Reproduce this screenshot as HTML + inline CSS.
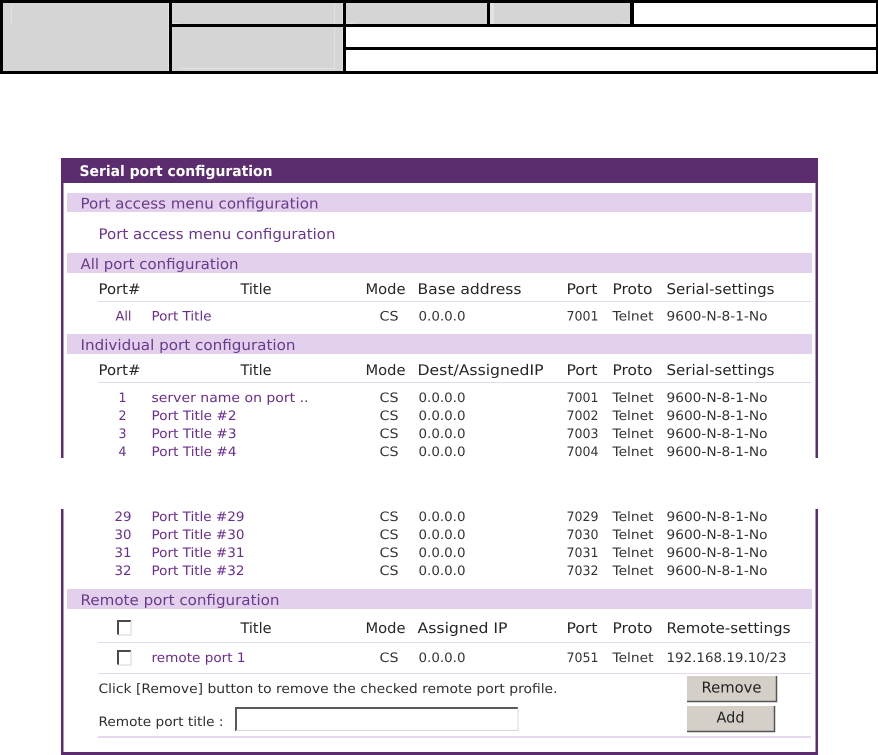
<!DOCTYPE html>
<html><head><meta charset="utf-8"><title>Serial port configuration</title>
<style>
html,body{margin:0;padding:0;background:#fff}
svg{display:block}
text{font-family:"DejaVu Sans","Liberation Sans",sans-serif;text-rendering:geometricPrecision;transform:translateX(-.5px)}
.b{font-size:14.6px;fill:#693a89}
.l{font-size:14.6px;fill:#6c3591}
.h{font-size:14.6px;fill:#262626}
.d{font-size:13px;fill:#333}
.p{font-size:13px;fill:#6b2b92}
.s{font-size:13px;fill:#2e2e2e}
</style></head><body>
<svg xmlns="http://www.w3.org/2000/svg" width="878" height="755" viewBox="0 0 878 755">
<rect width="878" height="755" fill="#fff"/>
<!-- top table -->
<rect x="0" y="0" width="878" height="74" fill="#000"/>
<rect x="3" y="3" width="166" height="68" fill="#d5d5d5"/>
<rect x="172" y="3" width="171" height="21" fill="#d5d5d5"/>
<rect x="172" y="27" width="171" height="44" fill="#d5d5d5"/>
<rect x="346" y="3" width="141" height="21" fill="#d5d5d5"/>
<rect x="490" y="3" width="140" height="21" fill="#d5d5d5"/>
<rect x="634" y="3" width="242" height="21" fill="#fff"/>
<rect x="346" y="27" width="530" height="20" fill="#fff"/>
<rect x="346" y="50" width="530" height="21" fill="#fff"/>
<g fill="#e2e2e2">
<rect x="11" y="4" width="1" height="20"/><rect x="168" y="3" width="1" height="68"/>
<rect x="334" y="4" width="1" height="20"/><rect x="342" y="3" width="1" height="21"/>
<rect x="172" y="23" width="8" height="1"/><rect x="334" y="28" width="1" height="40"/>
<rect x="180" y="68" width="155" height="1"/><rect x="342" y="27" width="1" height="44"/>
<rect x="346" y="23" width="8" height="1"/><rect x="490" y="3" width="4" height="21"/>
<rect x="622" y="23" width="8" height="1"/>
</g>
<!-- panel -->
<rect x="61" y="158" width="757" height="25" fill="#5b2d6e"/>
<rect x="61" y="183" width="2.500" height="275" fill="#5b2d6e"/>
<rect x="815.500" y="183" width="2.500" height="275" fill="#5b2d6e"/>
<rect x="61" y="509" width="2.500" height="246" fill="#5b2d6e"/>
<rect x="815.500" y="509" width="2.500" height="246" fill="#5b2d6e"/>
<rect x="61" y="752" width="757" height="3" fill="#5b2d6e"/>
<g fill="#e2d0ec">
<rect x="67" y="193" width="745" height="19"/>
<rect x="67" y="253" width="745" height="20"/>
<rect x="67" y="334" width="745" height="20"/>
<rect x="67" y="589" width="745" height="20"/>
</g>
<g fill="#e6d8ef">
<rect x="98" y="301" width="713" height="1"/>
<rect x="98" y="382" width="713" height="1"/>
<rect x="98" y="642" width="713" height="1"/>
<rect x="98" y="673" width="713" height="1"/>
<rect x="98" y="736" width="713" height="2"/>
</g>
<text x="80" y="176" font-size="14.600" font-weight="bold" fill="#fff" textLength="193" lengthAdjust="spacingAndGlyphs">Serial port configuration</text>
<text class="b" x="81" y="208.500" textLength="238" lengthAdjust="spacingAndGlyphs">Port access menu configuration</text>
<text class="l" x="99" y="239" textLength="237" lengthAdjust="spacingAndGlyphs">Port access menu configuration</text>
<text class="b" x="81" y="269" textLength="158" lengthAdjust="spacingAndGlyphs">All port configuration</text>
<text class="b" x="81" y="350" textLength="215" lengthAdjust="spacingAndGlyphs">Individual port configuration</text>
<text class="b" x="81" y="605" textLength="199" lengthAdjust="spacingAndGlyphs">Remote port configuration</text>
<!-- all port header -->
<text class="h" x="99" y="294" textLength="42" lengthAdjust="spacingAndGlyphs">Port#</text>
<text class="h" x="241" y="294" textLength="31" lengthAdjust="spacingAndGlyphs">Title</text>
<text class="h" x="366" y="294" textLength="40" lengthAdjust="spacingAndGlyphs">Mode</text>
<text class="h" x="418" y="294" textLength="104" lengthAdjust="spacingAndGlyphs">Base address</text>
<text class="h" x="567" y="294" textLength="31" lengthAdjust="spacingAndGlyphs">Port</text>
<text class="h" x="613" y="294" textLength="40" lengthAdjust="spacingAndGlyphs">Proto</text>
<text class="h" x="667" y="294" textLength="108" lengthAdjust="spacingAndGlyphs">Serial-settings</text>
<text class="p" x="116" y="320.500" textLength="16" lengthAdjust="spacingAndGlyphs">All</text>
<text class="p" x="152" y="320.500" textLength="60" lengthAdjust="spacingAndGlyphs">Port Title</text>
<text class="d" x="380" y="320.500" textLength="19" lengthAdjust="spacingAndGlyphs">CS</text>
<text class="d" x="419" y="320.500" textLength="47" lengthAdjust="spacingAndGlyphs">0.0.0.0</text>
<text class="d" x="567" y="320.500" textLength="32" lengthAdjust="spacingAndGlyphs">7001</text>
<text class="d" x="613" y="320.500" textLength="41" lengthAdjust="spacingAndGlyphs">Telnet</text>
<text class="d" x="667" y="320.500" textLength="101" lengthAdjust="spacingAndGlyphs">9600-N-8-1-No</text>
<!-- individual header -->
<text class="h" x="99" y="375" textLength="42" lengthAdjust="spacingAndGlyphs">Port#</text>
<text class="h" x="241" y="375" textLength="31" lengthAdjust="spacingAndGlyphs">Title</text>
<text class="h" x="366" y="375" textLength="40" lengthAdjust="spacingAndGlyphs">Mode</text>
<text class="h" x="418" y="375" textLength="126" lengthAdjust="spacingAndGlyphs">Dest/AssignedIP</text>
<text class="h" x="567" y="375" textLength="31" lengthAdjust="spacingAndGlyphs">Port</text>
<text class="h" x="613" y="375" textLength="40" lengthAdjust="spacingAndGlyphs">Proto</text>
<text class="h" x="667" y="375" textLength="108" lengthAdjust="spacingAndGlyphs">Serial-settings</text>
<!-- rows 1-4 -->
<text class="p" x="119" y="402" textLength="8" lengthAdjust="spacingAndGlyphs">1</text>
<text class="p" x="152" y="402" textLength="157" lengthAdjust="spacingAndGlyphs">server name on port ..</text>
<text class="d" x="380" y="402" textLength="19" lengthAdjust="spacingAndGlyphs">CS</text><text class="d" x="419" y="402" textLength="47" lengthAdjust="spacingAndGlyphs">0.0.0.0</text><text class="d" x="567" y="402" textLength="32" lengthAdjust="spacingAndGlyphs">7001</text><text class="d" x="613" y="402" textLength="41" lengthAdjust="spacingAndGlyphs">Telnet</text><text class="d" x="667" y="402" textLength="101" lengthAdjust="spacingAndGlyphs">9600-N-8-1-No</text>
<text class="p" x="119" y="420" textLength="8" lengthAdjust="spacingAndGlyphs">2</text>
<text class="p" x="152" y="420" textLength="85" lengthAdjust="spacingAndGlyphs">Port Title #2</text>
<text class="d" x="380" y="420" textLength="19" lengthAdjust="spacingAndGlyphs">CS</text><text class="d" x="419" y="420" textLength="47" lengthAdjust="spacingAndGlyphs">0.0.0.0</text><text class="d" x="567" y="420" textLength="32" lengthAdjust="spacingAndGlyphs">7002</text><text class="d" x="613" y="420" textLength="41" lengthAdjust="spacingAndGlyphs">Telnet</text><text class="d" x="667" y="420" textLength="101" lengthAdjust="spacingAndGlyphs">9600-N-8-1-No</text>
<text class="p" x="119" y="438" textLength="8" lengthAdjust="spacingAndGlyphs">3</text>
<text class="p" x="152" y="438" textLength="85" lengthAdjust="spacingAndGlyphs">Port Title #3</text>
<text class="d" x="380" y="438" textLength="19" lengthAdjust="spacingAndGlyphs">CS</text><text class="d" x="419" y="438" textLength="47" lengthAdjust="spacingAndGlyphs">0.0.0.0</text><text class="d" x="567" y="438" textLength="32" lengthAdjust="spacingAndGlyphs">7003</text><text class="d" x="613" y="438" textLength="41" lengthAdjust="spacingAndGlyphs">Telnet</text><text class="d" x="667" y="438" textLength="101" lengthAdjust="spacingAndGlyphs">9600-N-8-1-No</text>
<text class="p" x="119" y="456" textLength="8" lengthAdjust="spacingAndGlyphs">4</text>
<text class="p" x="152" y="456" textLength="85" lengthAdjust="spacingAndGlyphs">Port Title #4</text>
<text class="d" x="380" y="456" textLength="19" lengthAdjust="spacingAndGlyphs">CS</text><text class="d" x="419" y="456" textLength="47" lengthAdjust="spacingAndGlyphs">0.0.0.0</text><text class="d" x="567" y="456" textLength="32" lengthAdjust="spacingAndGlyphs">7004</text><text class="d" x="613" y="456" textLength="41" lengthAdjust="spacingAndGlyphs">Telnet</text><text class="d" x="667" y="456" textLength="101" lengthAdjust="spacingAndGlyphs">9600-N-8-1-No</text>
<!-- rows 29-32 -->
<text class="p" x="115" y="521" textLength="17" lengthAdjust="spacingAndGlyphs">29</text>
<text class="p" x="152" y="521" textLength="93" lengthAdjust="spacingAndGlyphs">Port Title #29</text>
<text class="d" x="380" y="521" textLength="19" lengthAdjust="spacingAndGlyphs">CS</text><text class="d" x="419" y="521" textLength="47" lengthAdjust="spacingAndGlyphs">0.0.0.0</text><text class="d" x="567" y="521" textLength="32" lengthAdjust="spacingAndGlyphs">7029</text><text class="d" x="613" y="521" textLength="41" lengthAdjust="spacingAndGlyphs">Telnet</text><text class="d" x="667" y="521" textLength="101" lengthAdjust="spacingAndGlyphs">9600-N-8-1-No</text>
<text class="p" x="115" y="539" textLength="17" lengthAdjust="spacingAndGlyphs">30</text>
<text class="p" x="152" y="539" textLength="93" lengthAdjust="spacingAndGlyphs">Port Title #30</text>
<text class="d" x="380" y="539" textLength="19" lengthAdjust="spacingAndGlyphs">CS</text><text class="d" x="419" y="539" textLength="47" lengthAdjust="spacingAndGlyphs">0.0.0.0</text><text class="d" x="567" y="539" textLength="32" lengthAdjust="spacingAndGlyphs">7030</text><text class="d" x="613" y="539" textLength="41" lengthAdjust="spacingAndGlyphs">Telnet</text><text class="d" x="667" y="539" textLength="101" lengthAdjust="spacingAndGlyphs">9600-N-8-1-No</text>
<text class="p" x="115" y="557" textLength="17" lengthAdjust="spacingAndGlyphs">31</text>
<text class="p" x="152" y="557" textLength="93" lengthAdjust="spacingAndGlyphs">Port Title #31</text>
<text class="d" x="380" y="557" textLength="19" lengthAdjust="spacingAndGlyphs">CS</text><text class="d" x="419" y="557" textLength="47" lengthAdjust="spacingAndGlyphs">0.0.0.0</text><text class="d" x="567" y="557" textLength="32" lengthAdjust="spacingAndGlyphs">7031</text><text class="d" x="613" y="557" textLength="41" lengthAdjust="spacingAndGlyphs">Telnet</text><text class="d" x="667" y="557" textLength="101" lengthAdjust="spacingAndGlyphs">9600-N-8-1-No</text>
<text class="p" x="115" y="575" textLength="17" lengthAdjust="spacingAndGlyphs">32</text>
<text class="p" x="152" y="575" textLength="93" lengthAdjust="spacingAndGlyphs">Port Title #32</text>
<text class="d" x="380" y="575" textLength="19" lengthAdjust="spacingAndGlyphs">CS</text><text class="d" x="419" y="575" textLength="47" lengthAdjust="spacingAndGlyphs">0.0.0.0</text><text class="d" x="567" y="575" textLength="32" lengthAdjust="spacingAndGlyphs">7032</text><text class="d" x="613" y="575" textLength="41" lengthAdjust="spacingAndGlyphs">Telnet</text><text class="d" x="667" y="575" textLength="101" lengthAdjust="spacingAndGlyphs">9600-N-8-1-No</text>
<!-- remote -->
<text class="h" x="241" y="633" textLength="31" lengthAdjust="spacingAndGlyphs">Title</text>
<text class="h" x="366" y="633" textLength="40" lengthAdjust="spacingAndGlyphs">Mode</text>
<text class="h" x="418" y="633" textLength="90" lengthAdjust="spacingAndGlyphs">Assigned IP</text>
<text class="h" x="567" y="633" textLength="31" lengthAdjust="spacingAndGlyphs">Port</text>
<text class="h" x="613" y="633" textLength="40" lengthAdjust="spacingAndGlyphs">Proto</text>
<text class="h" x="667" y="633" textLength="124" lengthAdjust="spacingAndGlyphs">Remote-settings</text>
<path d="M118 634.500V621H131" fill="none" stroke="#4a4a4a" stroke-width="2"/>
<path d="M131 621V635H118" fill="none" stroke="#d8d4cc" stroke-width="1"/>
<path d="M118 664.500V651H131" fill="none" stroke="#4a4a4a" stroke-width="2"/>
<path d="M131 651V665H118" fill="none" stroke="#d8d4cc" stroke-width="1"/>
<text class="p" x="152" y="662" textLength="94" lengthAdjust="spacingAndGlyphs">remote port 1</text>
<text class="d" x="380" y="662" textLength="19" lengthAdjust="spacingAndGlyphs">CS</text>
<text class="d" x="419" y="662" textLength="47" lengthAdjust="spacingAndGlyphs">0.0.0.0</text>
<text class="d" x="567" y="662" textLength="32" lengthAdjust="spacingAndGlyphs">7051</text>
<text class="d" x="613" y="662" textLength="41" lengthAdjust="spacingAndGlyphs">Telnet</text>
<text class="d" x="667" y="662" textLength="120" lengthAdjust="spacingAndGlyphs">192.168.19.10/23</text>
<text class="s" x="99" y="693" textLength="459" lengthAdjust="spacingAndGlyphs">Click [Remove] button to remove the checked remote port profile.</text>
<text class="s" x="99" y="726" textLength="125" lengthAdjust="spacingAndGlyphs">Remote port title :</text>
<!-- input -->
<rect x="235" y="707" width="283" height="24" fill="#fff"/>
<path d="M236 731V708H518" fill="none" stroke="#5a5a5a" stroke-width="2"/>
<path d="M518 708V730.500H236" fill="none" stroke="#dcd8d0" stroke-width="1"/>
<!-- buttons -->
<rect x="687" y="676" width="90" height="26" fill="#d4d0c8"/>
<path d="M687 701.500H776.500V676" fill="none" stroke="#555" stroke-width="1.500"/>
<text x="702" y="692.500" font-size="15" fill="#222" textLength="60" lengthAdjust="spacingAndGlyphs">Remove</text>
<rect x="687" y="706" width="88" height="26" fill="#d4d0c8"/>
<path d="M687 731.500H774.500V706" fill="none" stroke="#555" stroke-width="1.500"/>
<text x="717" y="722.500" font-size="15" fill="#222" textLength="28" lengthAdjust="spacingAndGlyphs">Add</text>
</svg>
</body></html>
